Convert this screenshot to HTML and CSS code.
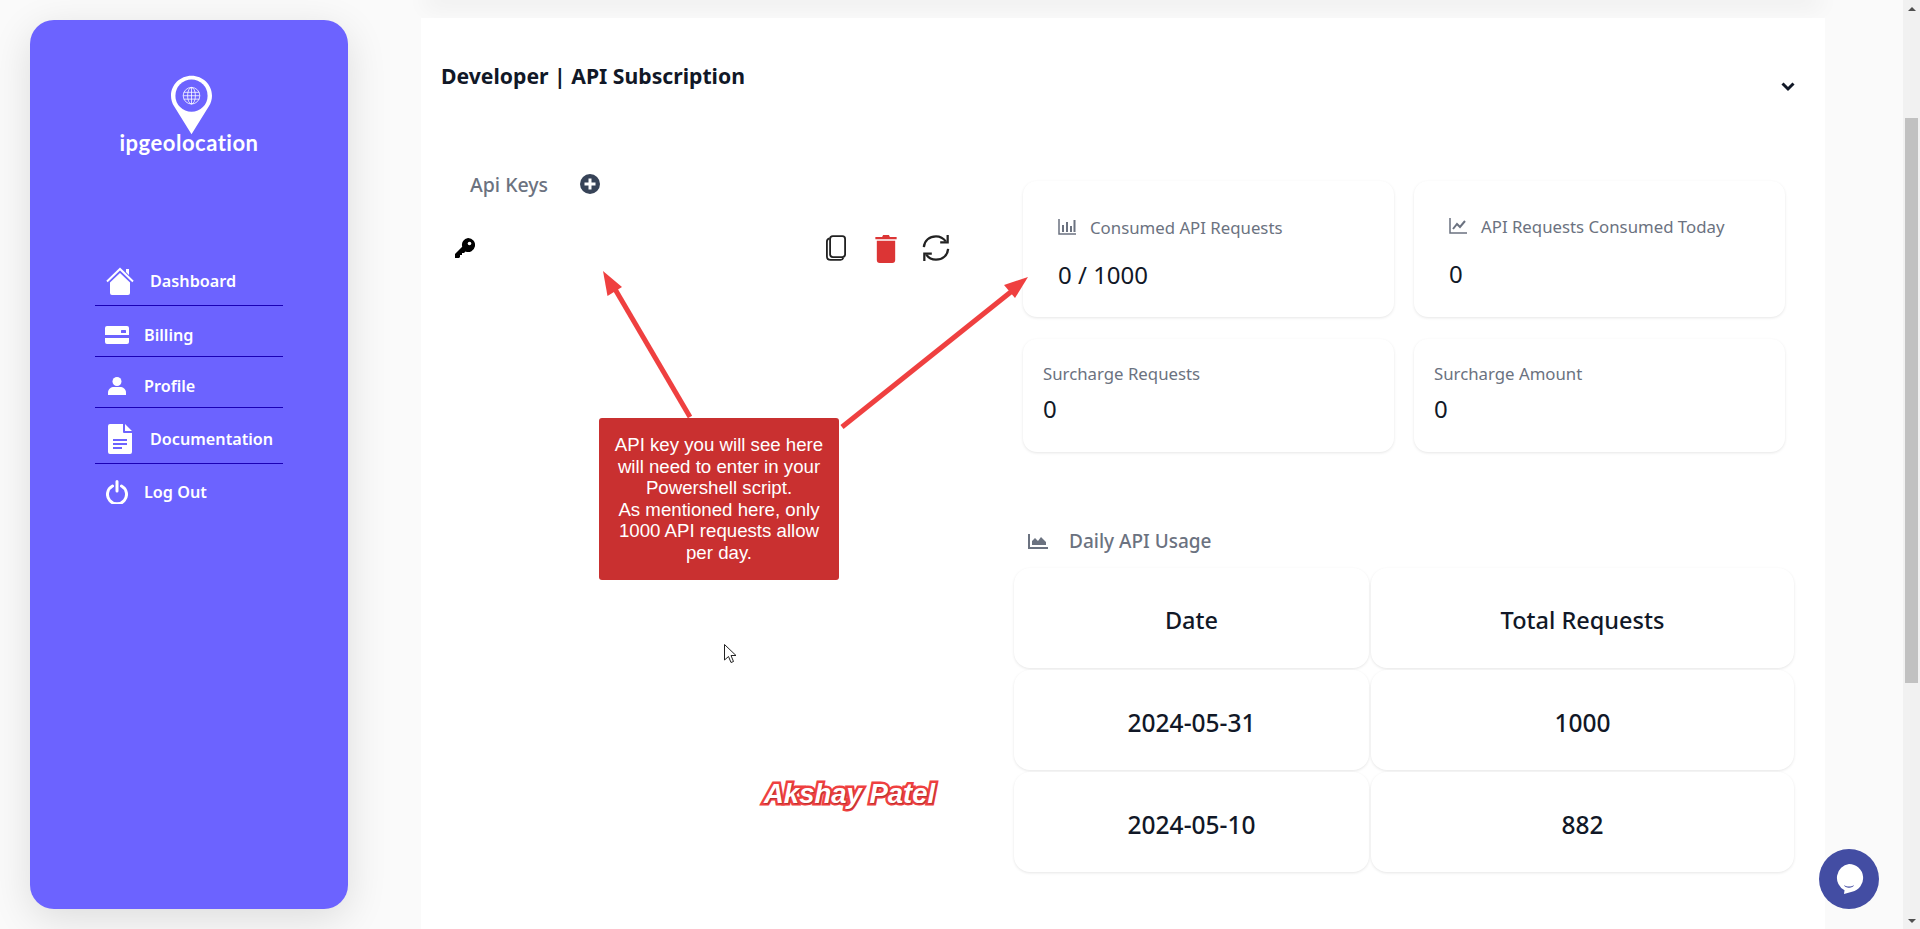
FILE: index.html
```html
<!DOCTYPE html>
<html lang="en">
<head>
    <meta charset="UTF-8">
    <meta name="viewport" content="width=device-width, initial-scale=1.0">
    <title>Developer | API Subscription</title>
    <link rel="stylesheet" href="styles.css">
</head>
<body>
    <aside class="sidebar">
        <div class="logo">
            <svg class="logo-pin" viewBox="0 0 42 60" width="41" height="60">
                <path fill="#fff" d="M21 0C9.4 0 0 9.2 0 20.5c0 4 1.2 7.7 3.2 10.8L21 60l17.8-28.700c2-3.100 3.200-6.800 3.200-10.800C42 9.200 32.600 0 21 0z"/>
                <circle cx="21" cy="20.500" r="16.500" fill="#6c63ff"/>
                <g fill="none" stroke="#fff" stroke-width=".8">
                    <circle cx="21" cy="20.500" r="8.500"/>
                    <ellipse cx="21" cy="20.500" rx="4" ry="8.500"/>
                    <path d="M21 12v17M13 17h16M12.500 20.500h17M13 24h16"/>
                </g>
            </svg>
            <div class="logo-text">ipgeolocation</div>
        </div>
        <ul class="nav">
            <li class="nav-item nav-tall">
                <svg class="nav-icon" viewBox="0 0 28 28" width="28" height="28">
                    <path fill="none" stroke="#fff" stroke-width="2" d="M1 14.500 14 2l13 12.500"/>
                    <path fill="#fff" d="M20 2h3v6l-3-3zM14 6l10 9.500V26a2 2 0 0 1-2 2H6a2 2 0 0 1-2-2V15.500z"/>
                </svg>
                <span>Dashboard</span>
            </li>
            <li class="nav-item">
                <svg class="nav-icon" viewBox="0 0 24 18" width="24" height="18">
                    <path fill="#fff" d="M2 0h20a2 2 0 0 1 2 2v7H0V2a2 2 0 0 1 2-2zM0 12h24v4a2 2 0 0 1-2 2H2a2 2 0 0 1-2-2z"/>
                    <rect x="16" y="4" width="5" height="3" rx=".5" fill="#6c63ff"/>
                </svg>
                <span>Billing</span>
            </li>
            <li class="nav-item">
                <svg class="nav-icon" viewBox="0 0 18 18" width="18" height="18">
                    <circle cx="9" cy="4.500" r="4.500" fill="#fff"/>
                    <path fill="#fff" d="M0 18v-2.500C0 12 3 10 6 10h6c3 0 6 2 6 5.500V18z"/>
                </svg>
                <span>Profile</span>
            </li>
            <li class="nav-item nav-tall">
                <svg class="nav-icon" viewBox="0 0 24 30" width="24" height="30">
                    <path fill="#fff" d="M2 0h13v8a1 1 0 0 0 1 1h8v19a2 2 0 0 1-2 2H2a2 2 0 0 1-2-2V2a2 2 0 0 1 2-2zM17 0l7 7h-7z"/>
                    <path stroke="#6c63ff" stroke-width="2" d="M5 16h14M5 20h14M5 24h9"/>
                </svg>
                <span>Documentation</span>
            </li>
            <li class="nav-item nav-last">
                <svg class="nav-icon" viewBox="0 0 22 24" width="22" height="24">
                    <path fill="none" stroke="#fff" stroke-width="3" stroke-linecap="round" d="M6.500 6a9.500 9.500 0 1 0 9 0M11 1.500V11"/>
                </svg>
                <span>Log Out</span>
            </li>
        </ul>
    </aside>

    <main class="content">
        <div class="prev-card"></div>
        <section class="panel">
            <header class="panel-head">
                <h2>Developer | API Subscription</h2>
                <svg class="chevron" viewBox="0 0 14 10" width="14" height="10">
                    <path fill="none" stroke="#111827" stroke-width="3" d="M1.500 1.500 7 7l5.500-5.500"/>
                </svg>
            </header>
            <div class="panel-body">
                <div class="keys">
                    <div class="keys-title">
                        <span>Api Keys</span>
                        <svg viewBox="0 0 20 20" width="20" height="20">
                            <circle cx="10" cy="10" r="10" fill="#374357"/>
                            <path stroke="#fff" stroke-width="3" d="M10 4.500v11M4.500 10h11"/>
                        </svg>
                    </div>
                    <div class="key-row">
                        <svg viewBox="0 0 20 20" width="20" height="20">
                            <path fill="#000" d="M13 0a7 7 0 1 1-2.500 13.500L9 15H7v2H5v2l-1 1H0v-4l7.200-7.200A7 7 0 0 1 13 0z"/>
                            <circle cx="14.500" cy="5.500" r="1.800" fill="#fff"/>
                        </svg>
                        <div class="key-actions">
                            <svg class="act-copy" viewBox="0 0 22 28" width="20" height="26">
                                <rect x="4.500" y="1" width="16.500" height="23" rx="3" fill="none" stroke="#222" stroke-width="2"/>
                                <path fill="none" stroke="#222" stroke-width="2" d="M4 3.500C2 4 1 5 1 7v16c0 2.500 1.500 4 4 4h11c1.500 0 2.500-.5 3-2"/>
                            </svg>
                            <svg class="act-trash" viewBox="0 0 22 30" width="22" height="29">
                                <path fill="#dc3535" d="M7 3l1-2h6l1 2h7v2.500H0V3zM1.500 7h19v20a3 3 0 0 1-3 3h-13a3 3 0 0 1-3-3z"/>
                            </svg>
                            <svg class="act-sync" viewBox="0 0 30 32" width="28" height="30">
                                <g fill="none" stroke="#222" stroke-width="2.400">
                                    <path d="M2 15C2.500 8 8 3.500 15 3.500c4.500 0 8 2 10.500 5.500"/>
                                    <path d="M27.500 2v8h-8"/>
                                    <path d="M28 17c-.5 7-6 11.500-13 11.500-4.500 0-8-2-10.500-5.500"/>
                                    <path d="M2.500 30v-8h8"/>
                                </g>
                            </svg>
                        </div>
                    </div>
                </div>
                <div class="usage">
                    <div class="cards">
                        <div class="card card-big">
                            <div class="card-label">
                                <svg viewBox="0 0 18 16" width="18" height="16">
                                    <path fill="none" stroke="#6b7280" stroke-width="1.500" d="M1 0v15h17"/>
                                    <path stroke="#6b7280" stroke-width="2" d="M5 6v7M9 3v10M13 7v6M16.500 1v12"/>
                                </svg>
                                <span>Consumed API Requests</span>
                            </div>
                            <div class="card-value">0 / 1000</div>
                        </div>
                        <div class="card card-big">
                            <div class="card-label label-up">
                                <svg viewBox="0 0 18 16" width="18" height="16">
                                    <path fill="none" stroke="#6b7280" stroke-width="1.500" d="M1 0v15h17"/>
                                    <path fill="none" stroke="#6b7280" stroke-width="2" d="M4 11l4-5 3 3 5-6"/>
                                </svg>
                                <span>API Requests Consumed Today</span>
                            </div>
                            <div class="card-value">0</div>
                        </div>
                        <div class="card">
                            <div class="card-label"><span>Surcharge Requests</span></div>
                            <div class="card-value">0</div>
                        </div>
                        <div class="card">
                            <div class="card-label"><span>Surcharge Amount</span></div>
                            <div class="card-value">0</div>
                        </div>
                    </div>
                    <div class="daily-title">
                        <svg viewBox="0 0 20 15" width="20" height="15">
                            <path fill="#6b7280" d="M0 0h2v13h18v2H0zM4 11V7l3-3 3 3 3-4 5 5v3z"/>
                        </svg>
                        <span>Daily API Usage</span>
                    </div>
                    <table class="daily-table">
                        <tr><th>Date</th><th>Total Requests</th></tr>
                        <tr><td>2024-05-31</td><td>1000</td></tr>
                        <tr><td>2024-05-10</td><td>882</td></tr>
                    </table>
                </div>
            </div>
        </section>
    </main>

    <div class="scrollbar">
        <span class="scroll-arrow arrow-up"></span>
        <div class="scroll-track"><div class="scroll-thumb"></div></div>
        <span class="scroll-arrow arrow-down"></span>
    </div>

    <!-- screenshot annotations, they sit on top of the page -->
    <svg class="arrows" viewBox="0 0 1920 929">
        <g stroke="#ef4040" stroke-width="5" fill="#ef4040">
            <path d="M690 417 612 284"/>
            <path stroke="none" d="M603 271 607.500 296 622 287z"/>
            <path d="M842 427 1012 291"/>
            <path stroke="none" d="M1028 277 1004 285 1015 298z"/>
        </g>
    </svg>
    <div class="note">
        API key you will see here will need to enter in your Powershell script.<br>
        As mentioned here, only 1000 API requests allow per day.
    </div>
    <div class="signature">Akshay Patel</div>
    <svg class="cursor" viewBox="0 0 13 20" width="13" height="20">
        <path fill="#fff" stroke="#222" d="M.5.500v15.500l4-3.500 2.500 6 2.500-1-2.500-6h5z"/>
    </svg>

    <div class="chat">
        <svg viewBox="0 0 30 32" width="30" height="32">
            <path fill="#fff" d="M15 1a14 14 0 0 1 3 27.700L10 31l.5-3.700A14 14 0 0 1 15 1z"/>
            <path fill="#434da3" d="M10 22c3 2 7 2 10 0-1 3.500-9 3.500-10 0z"/>
        </svg>
    </div>
</body>
</html>
```

FILE: styles.css
```css
* {
    box-sizing: border-box;
}

html, body {
    height: 929px;
    overflow: hidden;
}

body {
    margin: 0;
    display: flex;
    background: #fafafa;
    font-family: "Noto Sans", "Open Sans", sans-serif;
    color: #111827;
}

/* sidebar */

.sidebar {
    flex: none;
    width: 318px;
    height: 889px;
    margin: 20px 0 0 30px;
    padding-top: 55px;
    border-radius: 24px;
    background: #6c63ff;
    box-shadow: 0 10px 40px rgba(0, 0, 0, .12);
    color: #fff;
}

.logo {
    display: flex;
    flex-direction: column;
    align-items: center;
}

.logo-pin {
    display: block;
    margin-left: 5px;
}

.logo-text {
    margin-top: -6px;
    font-family: "Lato", sans-serif;
    font-size: 22px;
    font-weight: 700;
    line-height: 28px;
    letter-spacing: .5px;
}

.nav {
    list-style: none;
    margin: 93px 0 0 65px;
    padding: 0;
    width: 188px;
}

.nav-item {
    display: grid;
    grid-template-columns: 44px 1fr;
    column-gap: 5px;
    align-items: center;
    height: 51px;
    padding-top: 7px;
    border-bottom: 1px solid #1a00b5;
    font-size: 16.200px;
    font-weight: 600;
}

.nav-item.nav-tall {
    height: 56px;
    grid-template-columns: 49px 1fr;
    column-gap: 6px;
}

.nav-last {
    padding-top: 5px;
    border-bottom: none;
}

.nav-icon {
    justify-self: center;
}

/* main column */

.content {
    flex: none;
    width: 1404px;
    margin-left: 73px;
}

.prev-card {
    height: 0;
    box-shadow: 0 0 22px 6px rgba(0, 0, 0, .07);
    margin: 0 10px;
}

.panel {
    height: 911px;
    margin-top: 18px;
    background: #fff;
}

.panel-head {
    display: flex;
    justify-content: space-between;
    padding: 44px 30px 0 20px;
}

.panel-head h2 {
    margin: 0;
    font-size: 21.200px;
    font-weight: 700;
    line-height: 28px;
}

.chevron {
    margin-top: 20px;
}

.panel-body {
    display: flex;
    padding-top: 88px;
}

/* api keys */

.keys {
    flex: none;
    width: 593px;
}

.keys-title {
    display: flex;
    align-items: center;
    gap: 32px;
    height: 24px;
    margin-top: -8px;
    padding-left: 49px;
    font-size: 19.500px;
    font-weight: 500;
    color: #6b7280;
}

.key-row {
    display: flex;
    align-items: center;
    justify-content: space-between;
    margin-top: 37px;
    padding: 0 64px 0 34px;
}

.key-row svg {
    display: block;
}

.key-actions {
    display: flex;
    align-items: center;
}

.act-trash {
    margin-left: 29px;
}

.act-sync {
    margin-left: 25px;
}

/* right side */

.usage {
    flex: none;
    width: 780px;
}

.cards {
    display: grid;
    grid-template-columns: 371px 371px;
    grid-template-rows: 136px 113px;
    gap: 22px 20px;
    margin: 1px 0 0 9px;
}

.card {
    padding: 22px 20px 0;
    border-radius: 14px;
    background: #fff;
    box-shadow: 0 1px 3px rgba(0, 0, 0, .1);
}

.card-big {
    padding: 34px 35px 0;
}

.card-label {
    display: flex;
    align-items: center;
    gap: 14px;
    height: 24px;
    font-size: 16.800px;
    color: #6b7280;
}

.label-up {
    margin-top: -1px;
    margin-bottom: 3px;
}

.card-value {
    margin-top: 10px;
    font-size: 24px;
    line-height: 28px;
}

.card-big .card-value {
    margin-top: 22px;
}

.daily-title {
    display: flex;
    align-items: center;
    gap: 21px;
    height: 28px;
    margin-top: 75px;
    padding-left: 14px;
    font-size: 19px;
    font-weight: 500;
    color: #6b7280;
}

.daily-table {
    border-collapse: separate;
    border-spacing: 2px;
    table-layout: fixed;
    width: 784px;
    margin: 11px 0 0 -2px;
}

.daily-table th,
.daily-table td {
    height: 100px;
    padding: 4px 0 0;
    border-radius: 16px;
    background: #fff;
    box-shadow: 0 1px 3px rgba(0, 0, 0, .1);
    font-weight: 500;
    text-align: center;
}

.daily-table th {
    font-size: 23.500px;
}

.daily-table td {
    font-size: 24.500px;
}

.daily-table th:first-child,
.daily-table td:first-child {
    width: 355px;
}

/* scrollbar */

.scrollbar {
    position: absolute;
    top: 0;
    right: 0;
    display: flex;
    flex-direction: column;
    width: 17px;
    height: 929px;
    background: #f1f1f1;
}

.scroll-arrow {
    flex: none;
    height: 17px;
    display: flex;
    align-items: center;
    justify-content: center;
}

.arrow-up::before,
.arrow-down::before {
    content: "";
    border-left: 4px solid transparent;
    border-right: 4px solid transparent;
}

.arrow-up::before {
    border-bottom: 4px solid #505050;
}

.arrow-down::before {
    border-top: 4px solid #505050;
}

.scroll-track {
    flex: 1;
}

.scroll-thumb {
    height: 565px;
    margin: 101px 2px 0;
    background: #c1c1c1;
}

/* annotations */

.arrows {
    position: absolute;
    top: 0;
    left: 0;
    width: 1920px;
    height: 929px;
}

.note {
    position: absolute;
    left: 599px;
    top: 418px;
    width: 240px;
    height: 162px;
    padding: 16px 10px 0;
    border-radius: 3px;
    background: #c93030;
    font-family: "Liberation Sans", Arial, sans-serif;
    font-size: 18.670px;
    line-height: 21.600px;
    text-align: center;
    color: #fff;
}

.signature {
    position: absolute;
    left: 764px;
    top: 778px;
    font-family: "Liberation Sans", Arial, sans-serif;
    font-size: 27.500px;
    font-weight: 700;
    font-style: italic;
    color: #fff;
    -webkit-text-stroke: 5px #ef4040;
    paint-order: stroke fill;
    text-shadow: 1px 1px 1px rgba(0, 0, 0, .25);
}

.cursor {
    position: absolute;
    left: 724px;
    top: 644px;
}

.chat {
    position: absolute;
    left: 1819px;
    top: 849px;
    display: flex;
    align-items: center;
    justify-content: center;
    width: 60px;
    height: 60px;
    border-radius: 50%;
    background: #434da3;
}
```
